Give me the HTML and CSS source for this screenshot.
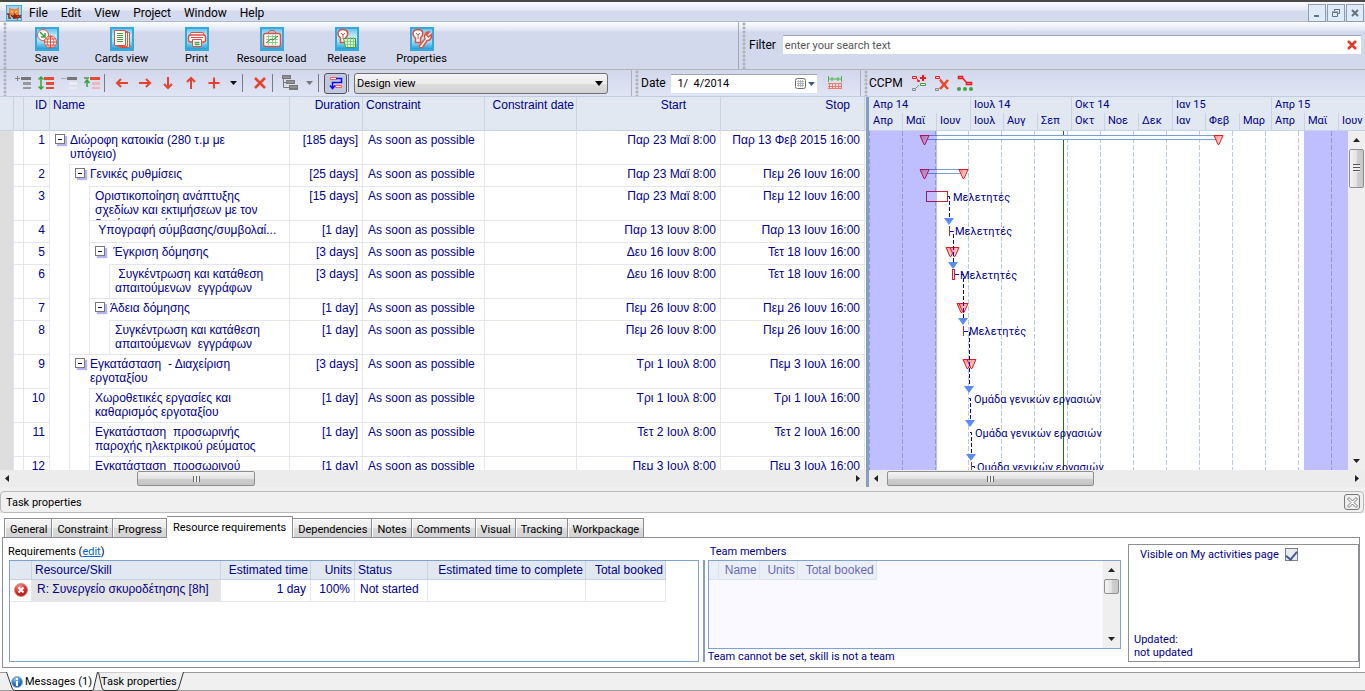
FILE: index.html
```
<!DOCTYPE html>
<html lang="el">
<head>
  <meta charset="UTF-8" />
  <meta name="viewport" content="width=device-width, initial-scale=1.0" />
  <title>Lynx - Task properties</title>
  <link rel="stylesheet" href="styles.css">
</head>
<body>
  <!-- shared gradients -->
  <svg class="defs" width="0" height="0" aria-hidden="true">
    <defs>
      <linearGradient id="tile" x1="0" y1="0" x2="0" y2="1">
        <stop offset="0" stop-color="#6cc6ea" />
        <stop offset="0.35" stop-color="#c4e9f7" />
        <stop offset="0.65" stop-color="#a0daf1" />
        <stop offset="1" stop-color="#1fa0d8" />
      </linearGradient>
      <linearGradient id="redTri" x1="0" y1="0" x2="1" y2="1">
        <stop offset="0" stop-color="#ff8888" />
        <stop offset="1" stop-color="#fff0ee" />
      </linearGradient>
      <radialGradient id="redBall" cx="0.4" cy="0.25" r="0.8">
        <stop offset="0" stop-color="#f59a94" />
        <stop offset="0.6" stop-color="#d42a24" />
        <stop offset="1" stop-color="#a81410" />
      </radialGradient>
      <radialGradient id="blueBall" cx="0.4" cy="0.25" r="0.8">
        <stop offset="0" stop-color="#8fc6f2" />
        <stop offset="0.6" stop-color="#2274c4" />
        <stop offset="1" stop-color="#0d4f98" />
      </radialGradient>
      <path id="tri" d="M-4.5 0.5H4.5L0.5 9.5H-0.5Z" fill="url(#redTri)" stroke="#dc1c1c" />
      <path id="arrow" d="M-5 0H5L0 7Z" fill="#5a8cf8" />
    </defs>
  </svg>

  <header class="menubar">
    <svg class="logo" width="16" height="16" viewBox="0 0 16 16">
      <rect width="16" height="16" fill="#3eaee2" />
      <rect x="1" y="1" width="14" height="14" fill="#9bd7ef" />
      <path d="M3 10L3 2L6 4H10L13 2V10Z" fill="#f0863a" />
      <path d="M5 6L7 7.500M11 6L9 7.500" stroke="#fbd9a8" />
      <path d="M1 9H3V13H5M5 10L7 12L8 10V14M9 14V10L11 13V10M12 10L15 13M15 10L12 13" fill="none" stroke="#8a2a10" stroke-width="1.500" />
    </svg>
    <nav class="menu">
      <button>File</button>
      <button>Edit</button>
      <button>View</button>
      <button>Project</button>
      <button>Window</button>
      <button>Help</button>
    </nav>
    <div class="window-buttons">
      <button aria-label="Minimize"><svg width="10" height="10"><path d="M2 7H7V9H2Z" fill="#66727f" /></svg></button>
      <button aria-label="Restore"><svg width="10" height="10"><path d="M3.500 3V1.500H8.500V5.500H7M1.500 4.500H6.500V8.500H1.500ZM1 4H7M3 1.500H9" fill="none" stroke="#66727f" /></svg></button>
      <button aria-label="Close"><svg width="10" height="10"><path d="M2 2L8 8M8 2L2 8" stroke="#66727f" stroke-width="2" /></svg></button>
    </div>
  </header>

  <div class="toolbar">
    <div class="bar main-bar">
      <button class="tool">
        <svg width="24" height="24"><rect width="24" height="24" fill="#35a9de" /><rect x="2" y="2" width="20" height="20" fill="url(#tile)" /><circle cx="8" cy="8" r="5.500" fill="#fff" stroke="#e05040" /><path d="M5 5L10 10M10 6V10H6" fill="none" stroke="#3aa13a" stroke-width="1.500" /><circle cx="15.500" cy="15" r="6" fill="#fff" stroke="#e05040" /><path d="M9.500 15H21.500M15.500 9V21M10.500 12H20.500M10.500 18H20.500M15.500 9C11 12 11 18 15.500 21C20 18 20 12 15.500 9" fill="none" stroke="#e05040" /></svg>
        Save
      </button>
      <button class="tool">
        <svg width="24" height="24"><rect width="24" height="24" fill="#35a9de" /><rect x="2" y="2" width="20" height="20" fill="url(#tile)" /><path d="M9.500 5.500H19.500V20.500H9.500ZM7.500 4.500H17.500V19.500H7.500Z" fill="#fff" stroke="#e05040" /><path d="M4.500 3.500H15.500V18.500H4.500Z" fill="#fff" stroke="#e05040" /><path d="M7 6.500H13M7 8.500H13M7 10.500H13M7 12.500H13M7 14.500H13" stroke="#4aa84a" /></svg>
        Cards view
      </button>
      <button class="tool">
        <svg width="24" height="24"><rect width="24" height="24" fill="#35a9de" /><rect x="2" y="2" width="20" height="20" fill="url(#tile)" /><path d="M5 8L6 5.500H18L19 8" fill="#fff" stroke="#e05040" /><rect x="3.500" y="8" width="17" height="7" rx="2" fill="#fff" stroke="#e05040" stroke-width="1.500" /><path d="M6 10.500H18" stroke="#e05040" /><path d="M7.500 12.500H16.500V19.500H7.500Z" fill="#fff" stroke="#e05040" /><path d="M9.500 15.500H14.500M9.500 17.500H14.500" stroke="#4aa84a" stroke-width="1.500" /></svg>
        Print
      </button>
      <button class="tool">
        <svg width="24" height="24"><rect width="24" height="24" fill="#35a9de" /><rect x="2" y="2" width="20" height="20" fill="url(#tile)" /><path d="M8 6L10 3.500H14L16 6" fill="none" stroke="#e05040" /><rect x="3.500" y="6.500" width="17" height="13" rx="2" fill="#fff" stroke="#e05040" stroke-width="1.500" /><path d="M6 9.500H18M6 12.500H18M6 15.500H18M8.500 8V18M12.500 8V18M15.500 8V18" stroke="#8fd08f" /><path d="M6 16L11 12L13 13L18 9" fill="none" stroke="#2c8c2c" /></svg>
        Resource load
      </button>
      <button class="tool">
        <svg width="24" height="24"><rect width="24" height="24" fill="#35a9de" /><rect x="2" y="2" width="20" height="20" fill="url(#tile)" /><path d="M5.500 12.500V11C1 7 3 2.500 8 2.500S14.500 7 10.500 11V15.500H5.500Z" fill="#fff" stroke="#e05040" stroke-width="1.500" /><path d="M6 6L8 8L10 6M8 8V12" fill="none" stroke="#e05040" /><path d="M8.500 11.500H20.500V20.500H10.500Z" fill="#d9f2d0" stroke="#3f9f3f" /><path d="M10 14.500H20M10 17.500H20M12.500 10V20M15.500 10V20M18.500 10V20" stroke="#8ccc8c" /></svg>
        Release
      </button>
      <button class="tool">
        <svg width="24" height="24"><rect width="24" height="24" fill="#35a9de" /><rect x="2" y="2" width="20" height="20" fill="url(#tile)" /><path d="M5.500 12.500V11C1 7 3 2.500 8 2.500S14.500 7 10.500 11V15.500H5.500Z" fill="#fff" stroke="#e05040" stroke-width="1.500" /><path d="M6 6L8 8L10 6M8 8V12" fill="none" stroke="#e05040" /><path d="M10 18L15 12C13 8 16 4.500 19 5L16.500 8L18.500 10L21.500 7.500C22 12 19 14 17 13.500L12.500 20.500C10 21.500 8.500 19.500 10 18Z" fill="#fff" stroke="#e05040" stroke-width="1.500" /></svg>
        Properties
      </button>
    </div>
    <div class="bar filter-bar">
      <label for="filter">Filter</label>
      <div class="field">
        <input id="filter" type="text" placeholder="enter your search text" />
        <button aria-label="Clear filter"><svg width="12" height="12"><path d="M2 2L10 10M10 2L2 10" stroke="#e03c28" stroke-width="2.500" /></svg></button>
      </div>
    </div>
  </div>

  <div class="toolbar second">
    <div class="bar edit-bar">
      <button aria-label="Insert row"><svg width="16" height="16"><path d="M0 3.500H5M2.500 1V6" stroke="#808080" /><path d="M6 2H16V5H6Z" fill="#777" /><path d="M8 7H16V10H8ZM8 12H16V14H8Z" fill="#999" /></svg></button>
      <button aria-label="Expand all"><svg width="16" height="16"><path d="M3 2V14M0.500 4.500L3 2L5.500 4.500M0.500 11.500L3 14L5.500 11.500" fill="none" stroke="#3aa13a" stroke-width="1.500" /><path d="M6 2H16V5H6ZM8 7H16V10H8ZM8 12H16V14H8Z" fill="#e34b36" /></svg></button>
      <button aria-label="Collapse row"><svg width="16" height="16"><path d="M0 3.500H5" stroke="#aaa" /><path d="M6 2H16V5H6Z" fill="#777" /><path d="M8 7H16V10H8ZM8 12H16V14H8Z" fill="#ececee" /></svg></button>
      <button aria-label="Collapse all"><svg width="16" height="16"><path d="M3 12V5M0.500 8L3 5L5.500 8M0 3H5" fill="none" stroke="#3aa13a" stroke-width="1.500" /><path d="M6 2H16V5H6Z" fill="#e34b36" /><path d="M8 7H16V10H8ZM8 12H16V14H8Z" fill="#f0b8b8" /></svg></button>
      <i class="sep"></i>
      <button aria-label="Outdent"><svg width="14" height="14"><path d="M1.500 7H13M6 3L2 7L6 11" fill="none" stroke="#e8402a" stroke-width="2" /></svg></button>
      <button aria-label="Indent"><svg width="14" height="14"><path d="M1 7H12.500M8 3L12 7L8 11" fill="none" stroke="#e8402a" stroke-width="2" /></svg></button>
      <button aria-label="Move down"><svg width="14" height="14"><path d="M7 1V12.500M3 8L7 12L11 8" fill="none" stroke="#e8402a" stroke-width="2" /></svg></button>
      <button aria-label="Move up"><svg width="14" height="14"><path d="M7 13V1.500M3 6L7 2L11 6" fill="none" stroke="#e8402a" stroke-width="2" /></svg></button>
      <button aria-label="Add"><svg width="14" height="14"><path d="M7 1.500V12.500M1.500 7H12.500" stroke="#e8402a" stroke-width="2" /></svg></button>
      <button class="drop" aria-label="Add options"><svg width="7" height="4"><path d="M0 0H7L3.500 4Z" fill="#111" /></svg></button>
      <i class="sep"></i>
      <button aria-label="Delete"><svg width="14" height="14"><path d="M2 2L12 12M12 2L2 12" stroke="#e8402a" stroke-width="2.500" /></svg></button>
      <i class="sep"></i>
      <button aria-label="Outline level"><svg width="17" height="16"><path d="M1 0H10V4H1ZM5 5H14V9H5ZM8 10H17V15H8Z" fill="#777" /><path d="M2.500 4V12.500H8M2.500 7.500H5" fill="none" stroke="#777" /><path d="M2 2H9M6 7H13M9 12H16" stroke="#aaa" /></svg></button>
      <button class="drop" aria-label="Level options"><svg width="7" height="4"><path d="M0 0H7L3.500 4Z" fill="#777" /></svg></button>
      <i class="sep"></i>
      <button class="pressed" aria-label="Show links" aria-pressed="true"><svg width="14" height="14"><path d="M1.500 1.500H7.500V3.500H1.500ZM6.500 9.500H12.500V11.500H6.500Z" fill="#fff" stroke="#ff5a5a" /><path d="M7 2.500H12.500V6.500H3.500V12M1 9.500L3.500 12.500L6 9.500" fill="none" stroke="#0a0aff" stroke-width="1.500" /></svg></button>
      <i class="sep"></i>
      <div class="select">
        <select aria-label="View"><option>Design view</option></select>
        <svg width="8" height="5"><path d="M0 0H8L4 5Z" fill="#000" /></svg>
      </div>
    </div>
    <div class="bar date-bar">
      <label for="date">Date</label>
      <div class="field">
        <input id="date" type="text" value=" 1/  4/2014" />
        <button aria-label="Open calendar"><svg width="22" height="12"><rect x="0.500" y="0.500" width="10" height="10" rx="2" fill="#fff" stroke="#6f6a66" /><path d="M2 3.500H9M2 5.500H9M2 7.500H9M3.500 2V9M5.500 2V9M7.500 2V9" stroke="#b5b5b8" /><path d="M13 4H20L16.500 8Z" fill="#44597c" /></svg></button>
      </div>
      <button class="icon" aria-label="Fit to dates"><svg width="16" height="16"><path d="M1.500 1V7M14.500 1V7" stroke="#49b449" /><path d="M2 4H14M5 2V6M11 2V6" stroke="#49b449" /><path d="M1 8.500H15M1 11.500H15M1 13.500H15M2.500 8V14M5.500 8V14M8.500 8V14M11.500 8V14M14.500 8V14" stroke="#ee7a68" /></svg></button>
    </div>
    <div class="bar ccpm-bar">
      <span>CCPM</span>
      <button aria-label="Create CCPM plan"><svg width="16" height="16"><path d="M1.500 1.500H5.500V3.500H1.500ZM6 3.500L7 5M6.500 5.500H8.500V6.500H6.500Z" fill="none" stroke="#f01818" /><path d="M9 3H15M12 0V6" stroke="#f01818" stroke-width="2" /><path d="M9.500 8.500H14.500V10.500H9.500Z" fill="#fff" stroke="#4a9a4a" /><path d="M1.500 13.500H4.500V15.500H1.500ZM5 13L8 10" fill="none" stroke="#888" /></svg></button>
      <button aria-label="Remove CCPM plan"><svg width="16" height="16"><path d="M1.500 1.500H5.500V3.500H1.500ZM6 3.500L8 6" fill="none" stroke="#f01818" /><path d="M6 5L14 14M14 5L6 14" stroke="#ee4422" stroke-width="2.500" /><path d="M1.500 13.500H4.500V15.500H1.500Z" fill="none" stroke="#888" /></svg></button>
      <button aria-label="CCPM status"><svg width="16" height="16"><path d="M1.500 1.500H5.500V3.500H1.500ZM6 3.500L9 7M9.500 7.500H14.500V9.500H9.500Z" fill="none" stroke="#f01818" stroke-width="1.500" /><circle cx="2" cy="14" r="2" fill="#3fa53f" /><circle cx="8" cy="14" r="2" fill="#3fa53f" /><circle cx="14" cy="14" r="2" fill="#3fa53f" /></svg></button>
    </div>
  </div>

  <main class="workspace">
    <section class="tasks">
      <div class="tasks-view">
        <table class="grid">
          <colgroup>
            <col class="c-mark"><col class="c-flag"><col class="c-id"><col class="c-name"><col class="c-duration"><col class="c-constraint"><col class="c-cdate"><col class="c-date"><col class="c-date"><col>
          </colgroup>
          <thead>
            <tr><th></th><th></th><th class="num">ID</th><th>Name</th><th class="num">Duration</th><th>Constraint</th><th class="num">Constraint date</th><th class="start">Start</th><th class="stop">Stop</th><th></th></tr>
          </thead>
          <tbody>
            <tr class="tall"><td></td><td></td><td class="num">1</td><td class="name"><div class="tree"><div class="node root"><button class="toggle" aria-label="Collapse"></button><span>Διώροφη κατοικία (280 τ.μ με<br>υπόγειο)</span></div></div></td><td class="num">[185 days]</td><td>As soon as possible</td><td></td><td class="num">Παρ 23 Μαϊ 8:00</td><td class="num">Παρ 13 Φεβ 2015 16:00</td><td></td></tr>
            <tr><td></td><td></td><td class="num">2</td><td class="name"><div class="tree"><i></i><div class="node"><button class="toggle" aria-label="Collapse"></button><span>Γενικές ρυθμίσεις</span></div></div></td><td class="num">[25 days]</td><td>As soon as possible</td><td></td><td class="num">Παρ 23 Μαϊ 8:00</td><td class="num">Πεμ 26 Ιουν 16:00</td><td></td></tr>
            <tr class="tall"><td></td><td></td><td class="num">3</td><td class="name"><div class="tree"><i></i><i></i><div class="node"><span>Οριστικοποίηση ανάπτυξης<br>σχεδίων και εκτιμήσεων με τον<br>δημόσιο φορέα</span></div></div></td><td class="num">[15 days]</td><td>As soon as possible</td><td></td><td class="num">Παρ 23 Μαϊ 8:00</td><td class="num">Πεμ 12 Ιουν 16:00</td><td></td></tr>
            <tr><td></td><td></td><td class="num">4</td><td class="name"><div class="tree"><i></i><i></i><div class="node"><span>&nbsp;Υπογραφή σύμβασης/συμβολαί...</span></div></div></td><td class="num">[1 day]</td><td>As soon as possible</td><td></td><td class="num">Παρ 13 Ιουν 8:00</td><td class="num">Παρ 13 Ιουν 16:00</td><td></td></tr>
            <tr><td></td><td></td><td class="num">5</td><td class="name"><div class="tree"><i></i><i></i><div class="node"><button class="toggle" aria-label="Collapse"></button><span>&nbsp;Έγκριση δόμησης</span></div></div></td><td class="num">[3 days]</td><td>As soon as possible</td><td></td><td class="num">Δευ 16 Ιουν 8:00</td><td class="num">Τετ 18 Ιουν 16:00</td><td></td></tr>
            <tr class="tall"><td></td><td></td><td class="num">6</td><td class="name"><div class="tree"><i></i><i></i><i></i><div class="node"><span>&nbsp;Συγκέντρωση και κατάθεση<br>απαιτούμενων&nbsp; εγγράφων</span></div></div></td><td class="num">[3 days]</td><td>As soon as possible</td><td></td><td class="num">Δευ 16 Ιουν 8:00</td><td class="num">Τετ 18 Ιουν 16:00</td><td></td></tr>
            <tr><td></td><td></td><td class="num">7</td><td class="name"><div class="tree"><i></i><i></i><div class="node"><button class="toggle" aria-label="Collapse"></button><span>Άδεια δόμησης</span></div></div></td><td class="num">[1 day]</td><td>As soon as possible</td><td></td><td class="num">Πεμ 26 Ιουν 8:00</td><td class="num">Πεμ 26 Ιουν 16:00</td><td></td></tr>
            <tr class="tall"><td></td><td></td><td class="num">8</td><td class="name"><div class="tree"><i></i><i></i><i></i><div class="node"><span>Συγκέντρωση και κατάθεση<br>απαιτούμενων&nbsp; εγγράφων</span></div></div></td><td class="num">[1 day]</td><td>As soon as possible</td><td></td><td class="num">Πεμ 26 Ιουν 8:00</td><td class="num">Πεμ 26 Ιουν 16:00</td><td></td></tr>
            <tr class="tall"><td></td><td></td><td class="num">9</td><td class="name"><div class="tree"><i></i><div class="node"><button class="toggle" aria-label="Collapse"></button><span>Εγκατάσταση&nbsp; - Διαχείριση<br>εργοταξίου</span></div></div></td><td class="num">[3 days]</td><td>As soon as possible</td><td></td><td class="num">Τρι 1 Ιουλ 8:00</td><td class="num">Πεμ 3 Ιουλ 16:00</td><td></td></tr>
            <tr class="tall"><td></td><td></td><td class="num">10</td><td class="name"><div class="tree"><i></i><i></i><div class="node"><span>Χωροθετικές εργασίες και<br>καθαρισμός εργοταξίου</span></div></div></td><td class="num">[1 day]</td><td>As soon as possible</td><td></td><td class="num">Τρι 1 Ιουλ 8:00</td><td class="num">Τρι 1 Ιουλ 16:00</td><td></td></tr>
            <tr class="tall"><td></td><td></td><td class="num">11</td><td class="name"><div class="tree"><i></i><i></i><div class="node"><span>Εγκατάσταση&nbsp; προσωρινής<br>παροχής ηλεκτρικού ρεύματος</span></div></div></td><td class="num">[1 day]</td><td>As soon as possible</td><td></td><td class="num">Τετ 2 Ιουλ 8:00</td><td class="num">Τετ 2 Ιουλ 16:00</td><td></td></tr>
            <tr class="tall"><td></td><td></td><td class="num">12</td><td class="name"><div class="tree"><i></i><i></i><div class="node"><span>Εγκατάσταση&nbsp; προσωρινού</span></div></div></td><td class="num">[1 day]</td><td>As soon as possible</td><td></td><td class="num">Πεμ 3 Ιουλ 8:00</td><td class="num">Πεμ 3 Ιουλ 16:00</td><td></td></tr>
          </tbody>
        </table>
      </div>
      <div class="hscroll">
        <svg width="4" height="7"><path d="M4 0V7L0 3.500Z" fill="#222" /></svg>
        <div class="track"><div class="thumb task-thumb"></div></div>
        <svg width="4" height="7"><path d="M0 0V7L4 3.500Z" fill="#222" /></svg>
      </div>
    </section>

    <section class="gantt">
      <div class="timescale">
        <div class="quarter"><b>Απρ 14</b><div><span>Απρ</span><span>Μαϊ</span><span>Ιουν</span></div></div>
        <div class="quarter"><b>Ιουλ 14</b><div><span>Ιουλ</span><span>Αυγ</span><span>Σεπ</span></div></div>
        <div class="quarter"><b>Οκτ 14</b><div><span>Οκτ</span><span>Νοε</span><span>Δεκ</span></div></div>
        <div class="quarter"><b>Ιαν 15</b><div><span>Ιαν</span><span>Φεβ</span><span class="short">Μαρ</span></div></div>
        <div class="quarter"><b>Απρ 15</b><div><span>Απρ</span><span>Μαϊ</span><span>Ιουν</span></div></div>
      </div>
      <div class="gantt-body">
        <svg class="chart">
          <defs>
            <pattern id="months" width="33" height="7" patternUnits="userSpaceOnUse"><path d="M0.500 0V5" stroke="#b9cbe0" /></pattern>
          </defs>
          <rect width="100%" height="100%" fill="url(#months)" />
          <path d="M194.500 0V2000" stroke="#0a7a0a" />

          <g fill="#fff" stroke="#7a9fd6">
            <rect x="55.500" y="4.500" width="294" height="4" />
            <rect x="55.500" y="38.500" width="39" height="4" />
          </g>
          <g fill="#fff" stroke="#cc2233">
            <rect x="57.500" y="60.500" width="21" height="10" />
            <rect x="83.500" y="138.500" width="2" height="10" />
            <path d="M80.500 95V105M94.500 195V205M102.500 331V341" />
          </g>
          <g>
            <use href="#tri" x="55.500" y="4" /><use href="#tri" x="349.500" y="4" />
            <use href="#tri" x="55.500" y="38" /><use href="#tri" x="94.500" y="38" />
            <use href="#tri" x="81.500" y="116" /><use href="#tri" x="85.500" y="116" />
            <use href="#tri" x="92.500" y="172" /><use href="#tri" x="94.500" y="172" />
            <use href="#tri" x="98.500" y="228" /><use href="#tri" x="102.500" y="228" />
          </g>
          <path class="link" d="M79 65.500H80.500V88M81 100.500H84.500V131M86 143.500H94.500V187M95 200.500H100.500V256M100 267.500H101.500V290M101 301.500H102.500V324M103 335.500H105.500V345" />
          <g>
            <use href="#arrow" x="80" y="87" /><use href="#arrow" x="84" y="131" /><use href="#arrow" x="94" y="187" />
            <use href="#arrow" x="100" y="255" /><use href="#arrow" x="101" y="289" /><use href="#arrow" x="102" y="323" />
          </g>
          <text x="84" y="70">Μελετητές</text>
          <text x="86" y="104">Μελετητές</text>
          <text x="91" y="148">Μελετητές</text>
          <text x="100" y="204">Μελετητές</text>
          <text x="105" y="272">Ομάδα γενικών εργασιών</text>
          <text x="106" y="306">Ομάδα γενικών εργασιών</text>
          <text x="108" y="340">Ομάδα γενικών εργασιών</text>
          <!-- months outside the plan -->
          <g fill="#0000ff" fill-opacity="0.25">
            <rect width="68" height="100%" />
            <rect x="435" width="45" height="100%" />
          </g>
        </svg>
        <div class="vscroll">
          <svg width="7" height="4"><path d="M0 4H7L3.500 0Z" fill="#222" /></svg>
          <div class="track"><div class="thumb"></div></div>
          <svg width="7" height="4"><path d="M0 0H7L3.500 4Z" fill="#222" /></svg>
        </div>
      </div>
      <div class="hscroll">
        <svg width="4" height="7"><path d="M4 0V7L0 3.500Z" fill="#222" /></svg>
        <div class="track"><div class="thumb gantt-thumb"></div></div>
        <svg width="4" height="7"><path d="M0 0V7L4 3.500Z" fill="#222" /></svg>
      </div>
    </section>
  </main>

  <div class="panel-title">
    <span>Task properties</span>
    <button aria-label="Close panel"><svg width="11" height="11"><path d="M2 0.500L5.500 4L9 0.500L10.500 2L7 5.500L10.500 9L9 10.500L5.500 7L2 10.500L0.500 9L4 5.500L0.500 2Z" fill="#fff" stroke="#777" /></svg></button>
  </div>

  <section class="panel">
    <div class="tabs">
      <button>General</button>
      <button>Constraint</button>
      <button>Progress</button>
      <button class="active">Resource requirements</button>
      <button>Dependencies</button>
      <button>Notes</button>
      <button>Comments</button>
      <button>Visual</button>
      <button>Tracking</button>
      <button>Workpackage</button>
    </div>
    <div class="tab-content">
      <div class="requirements">
        <div class="caption">Requirements (<a href="#">edit</a>)</div>
        <div class="box">
          <table class="mini req-table">
            <colgroup><col class="r-icon"><col class="r-skill"><col class="r-time"><col class="r-units"><col class="r-status"><col class="r-complete"><col class="r-booked"></colgroup>
            <tr><th></th><th>Resource/Skill</th><th class="num">Estimated time</th><th class="num">Units</th><th>Status</th><th class="num">Estimated time to complete</th><th class="num">Total booked</th></tr>
            <tr>
              <td class="state"><svg width="14" height="14"><circle cx="7" cy="7" r="6.500" fill="url(#redBall)" stroke="#d88" /><path d="M4.500 4.500L9.500 9.500M9.500 4.500L4.500 9.500" stroke="#fff" stroke-width="2" /></svg></td>
              <td class="selected">R: Συνεργείο σκυροδέτησης [8h]</td><td class="num">1 day</td><td class="num">100%</td><td>Not started</td><td></td><td></td>
            </tr>
          </table>
        </div>
      </div>
      <div class="splitter"></div>
      <div class="team">
        <div class="caption">Team members</div>
        <div class="box">
          <div class="team-list">
            <table class="mini team-table">
              <colgroup><col class="t-mark"><col class="t-name"><col class="t-units"><col class="t-booked"></colgroup>
              <tr><th></th><th class="num">Name</th><th class="num">Units</th><th class="num">Total booked</th></tr>
            </table>
          </div>
          <div class="vscroll">
            <svg width="7" height="4"><path d="M0 4H7L3.500 0Z" fill="#222" /></svg>
            <div class="track"><div class="thumb small"></div></div>
            <svg width="7" height="4"><path d="M0 0H7L3.500 4Z" fill="#222" /></svg>
          </div>
        </div>
        <div class="note">Team cannot be set, skill is not a team</div>
      </div>
      <div class="activity">
        <div class="visible">
          <label for="visible">Visible on My activities page</label>
          <input type="checkbox" id="visible" checked />
        </div>
        <div class="updated">Updated:<br>not updated</div>
      </div>
    </div>
  </section>

  <footer class="bottom-tabs">
    <button class="messages">
      <svg class="shape" width="92" height="19"><path d="M0 0L6 16Q7 18.500 9 18.500H86Q88 18.500 88 16L92 0Z" fill="#fff" /><path d="M0.500 0L6 16Q7 18.500 9 18.500H86Q88 18.500 88 15L91.500 0" fill="none" stroke="#333" /></svg>
      <svg width="12" height="12"><circle cx="6" cy="6" r="5.500" fill="url(#blueBall)" stroke="#9bc" /><path d="M6 2V4M6 5V10" stroke="#fff" stroke-width="2" /></svg>
      <span>Messages (1)</span>
    </button>
    <button class="properties">
      <svg class="shape" width="86" height="19"><path d="M0.500 0.500L4 16Q5 18.500 7 18.500H78Q80 18.500 81 15L85.500 0" fill="#f0f0f0" stroke="#333" /></svg>
      <span>Task properties</span>
    </button>
  </footer>
</body>
</html>
```
FILE: styles.css
```
* {
  box-sizing: border-box;
}
body {
  margin: 0;
  height: 100vh;
  display: flex;
  flex-direction: column;
  overflow: hidden;
  background: #f0f0f0;
  color: #000;
  font: 11px/13px Roboto, Tahoma, sans-serif;
}
button, input, select {
  font: inherit;
  color: inherit;
  margin: 0;
  padding: 0;
  border: none;
  background: none;
}
svg {
  display: block;
  flex: none;
}
.defs {
  position: absolute;
}

/* menu */
.menubar {
  flex: none;
  display: flex;
  align-items: center;
  height: 22px;
  padding: 3px 1px 0 6px;
  border-top: 2px solid #4a4a4a;
  border-bottom: 1px solid #b4b8c4;
  background: linear-gradient(#fbfcfe, #e6eaf6 8px, #d5dbee 9px, #d5dbee);
}
.menu {
  flex: 1;
  display: flex;
  gap: 13px;
  padding-left: 7px;
  font-size: 12px;
}
.window-buttons {
  display: flex;
  gap: 1px;
}
.window-buttons button {
  display: flex;
  align-items: center;
  justify-content: center;
  width: 18px;
  height: 18px;
  border: 1px solid #8e9db0;
  background: #dfebf7;
}

/* toolbars */
.toolbar {
  flex: none;
  display: flex;
  height: 48px;
  border-bottom: 1px solid #b4b4ba;
}
.second {
  height: 27px;
  border-bottom-color: #c0cde0;
}
.bar {
  display: flex;
  align-items: center;
  background: radial-gradient(circle, #b0b2bc 1px, transparent 2px) 3px 0 / 4px 4px repeat-y, linear-gradient(#fbfcfe, #e2e7f4 8px, #d3d9ed 10px, #d3d9ed);
}
.second .bar {
  background: radial-gradient(circle, #b0b2bc 1px, transparent 2px) 3px 0 / 4px 4px repeat-y, linear-gradient(#d2d8ec, #dfe5f4);
}
.main-bar {
  flex: 0 1 739px;
  padding-left: 9px;
  border-right: 1px solid #a8a8b0;
}
.tool {
  display: flex;
  flex-direction: column;
  align-items: center;
  gap: 1px;
  width: 75px;
  white-space: nowrap;
}
.filter-bar {
  flex: 1;
  gap: 7px;
  padding: 0 4px 2px 10px;
}
.filter-bar label, .date-bar label, .ccpm-bar span {
  font-size: 12px;
}
.filter-bar label {
  padding-top: 2px;
}
.field {
  display: flex;
  align-items: center;
  background: #fff;
  border-top: 1px solid #a0a4b0;
  height: 19px;
}
.filter-bar .field {
  flex: 1;
  padding-right: 3px;
}
.field input {
  flex: 1;
  min-width: 0;
  outline: none;
}
.filter-bar input {
  padding-left: 2px;
}
.filter-bar input::placeholder {
  color: #555;
  opacity: 1;
}
.edit-bar {
  width: 632px;
  padding-left: 11px;
  border-right: 1px solid #b0b0b8;
}
.edit-bar button, .ccpm-bar button {
  display: flex;
  align-items: center;
  justify-content: center;
  width: 23px;
  height: 21px;
}
.edit-bar .drop {
  width: 16px;
}
.edit-bar .pressed {
  border: 1px solid #51545e;
  border-radius: 3px;
  background: #c3c9dd;
}
.sep {
  width: 1px;
  height: 18px;
  margin: 0 5px 0 1px;
  background: #777b88;
}
.select {
  display: flex;
  align-items: center;
  width: 254px;
  height: 21px;
  padding-right: 4px;
  border: 1px solid #707070;
  border-radius: 3px;
  background: linear-gradient(#f4f4f4, #ebebeb 50%, #dddddd 51%, #d2d2d2);
}
.select select {
  flex: 1;
  appearance: none;
  padding-left: 2px;
}
.date-bar {
  width: 229px;
  gap: 5px;
  padding-left: 9px;
  border-right: 1px solid #b0b0b8;
}
.date-bar .field {
  flex: none;
  width: 146px;
}
.date-bar input {
  padding-left: 4px;
  white-space: pre;
}
.date-bar .icon {
  padding-left: 5px;
}
.ccpm-bar {
  flex: 1;
  padding-left: 8px;
}
.ccpm-bar span {
  padding-right: 5px;
}

/* task table */
.workspace {
  flex: 1;
  min-height: 0;
  display: flex;
  padding-bottom: 4px;
  color: #00008b;
}
.tasks {
  flex: 0 0 866px;
  display: flex;
  flex-direction: column;
}
.tasks-view {
  flex: 1;
  min-height: 0;
  overflow: hidden;
  background: #fff;
}
.grid, .mini {
  table-layout: fixed;
  border-collapse: separate;
  border-spacing: 0;
  font: 12px/14px "Liberation Sans", Arial, sans-serif;
}
.grid {
  width: 100%;
}
.c-mark { width: 14px; }
.c-flag { width: 10px; }
.c-id { width: 26px; }
.c-name { width: 240px; }
.c-duration { width: 73px; }
.c-constraint { width: 122px; }
.c-cdate { width: 92px; }
.c-date { width: 144px; }
.grid th, .mini th {
  border-right: 1px solid #c5d3e5;
  background: #e1e8f1;
  font-weight: normal;
  text-align: left;
  vertical-align: top;
  white-space: nowrap;
}
.mini th {
  border-bottom: 1px solid #c5d3e5;
}
.grid th {
  height: 33px;
  padding: 1px 2px 0 3px;
}
.grid th:last-child, .grid td:last-child {
  border-right: none;
}
.grid .num, .mini .num {
  text-align: right;
}
.grid th.start {
  padding-right: 34px;
  text-align: right;
}
.grid th.stop {
  padding-right: 14px;
  text-align: right;
}
.grid td {
  height: 22px;
  padding: 2px 4px 0 5px;
  border-right: 1px solid #e3e6f0;
  border-top: 1px solid #e3e6f0;
  vertical-align: top;
  white-space: nowrap;
}
.grid .tall td {
  height: 34px;
}
.grid td:first-child {
  border-top-color: #dedede;
  background: #dedede;
}
.grid td.name {
  padding: 0;
  border-top: none;
}
.tree {
  display: flex;
  height: 22px;
  overflow: hidden;
}
.tall .tree {
  height: 34px;
}
.tree i {
  flex: none;
  width: 20px;
  border-left: 1px solid #e3e6f0;
}
.tree i:first-child {
  width: 19px;
  border-left: none;
}
.node {
  flex: 1;
  display: flex;
  gap: 5px;
  padding: 2px 0 0 5px;
  border-left: 1px solid #e3e6f0;
  border-top: 1px solid #e3e6f0;
}
.root {
  border-left: none;
}
.grid tr:first-child td, .root {
  border-top-color: #c5d3e5;
}
.toggle {
  width: 10px;
  height: 10px;
  margin-top: 1px;
  border: 1px solid #777;
  background: linear-gradient(#111, #111) center / 4px 1px no-repeat #fff;
  box-shadow: 2px 2px 1px #b4b4f4;
}

/* scrollbars */
.hscroll {
  flex: none;
  display: flex;
  align-items: center;
  gap: 5px;
  height: 17px;
  padding: 0 6px 1px 5px;
  background: #ececec;
}
.track {
  flex: 1;
}
.thumb {
  border: 1px solid #8f8f8f;
  border-radius: 2px;
}
.hscroll .thumb {
  height: 15px;
  background: linear-gradient(#f4f4f4, #e2e2e2 50%, #cfcfcf 51%, #c4c4c4);
}
.hscroll .thumb::before {
  content: "";
  display: block;
  width: 7px;
  height: 6px;
  margin: 4px auto 0;
  background: repeating-linear-gradient(90deg, #666 0, #666 1px, #eee 1px, #eee 3px);
}
.task-thumb {
  width: 118px;
  margin-left: 123px;
}
.gantt-thumb {
  width: 207px;
  margin-left: 4px;
}
.vscroll {
  flex: none;
  display: flex;
  flex-direction: column;
  align-items: center;
  width: 17px;
  padding: 7px 0;
  background: #efefef;
}
.vscroll .thumb {
  width: 15px;
  height: 39px;
  margin-top: 7px;
  background: linear-gradient(90deg, #f4f4f4, #e2e2e2 50%, #cfcfcf 51%, #c8c8c8);
}
.vscroll .thumb::before {
  content: "";
  display: block;
  width: 7px;
  height: 8px;
  margin: 14px auto 0;
  background: repeating-linear-gradient(#555 0, #555 1px, #eee 1px, #eee 3px);
}
.vscroll .small {
  height: 15px;
}
.vscroll .small::before {
  display: none;
}

/* gantt */
.gantt {
  flex: 1;
  min-width: 0;
  display: flex;
  flex-direction: column;
  border-left: 3px solid #84a0bd;
}
.timescale {
  flex: none;
  display: flex;
  height: 34px;
  overflow: hidden;
  border-bottom: 1px solid #c5d3e5;
  background: #e1e8f1;
  line-height: 14px;
}
.quarter {
  flex: none;
  border-left: 1px solid #c5d3e5;
}
.quarter:first-child {
  padding-left: 1px;
  border-left: none;
}
.quarter b {
  display: block;
  height: 16px;
  padding: 1px 0 0 3px;
  font-weight: normal;
}
.quarter div {
  display: flex;
}
.quarter span {
  width: 34px;
  height: 17px;
  padding: 1px 0 0 3px;
  border-left: 1px solid #c5d3e5;
}
.quarter span:first-child {
  width: 32px;
  border-left: none;
}
.quarter .short {
  width: 32px;
}
.gantt-body {
  flex: 1;
  min-height: 0;
  display: flex;
  background: #fff;
}
.chart {
  flex: 1;
  min-width: 0;
  width: 100%;
  height: 100%;
}
.chart text {
  fill: #00008b;
}
.link {
  fill: none;
  stroke: #0000c8;
  stroke-dasharray: 4 2;
}

/* task properties */
.panel-title {
  flex: none;
  display: flex;
  align-items: center;
  justify-content: space-between;
  height: 22px;
  margin-right: 1px;
  padding: 0 3px 0 5px;
  border: 1px solid #b8b8b8;
  border-radius: 4px;
}
.panel-title button {
  display: flex;
  align-items: center;
  justify-content: center;
  width: 16px;
  height: 16px;
  border: 1px solid #777;
  border-radius: 3px;
}
.panel {
  flex: none;
  display: flex;
  flex-direction: column;
  height: 159px;
  padding: 3px 5px 4px 2px;
  background: #fff;
}
.tabs {
  display: flex;
  align-items: flex-end;
  padding-left: 2px;
}
.tabs button {
  height: 19px;
  padding: 2px 4px 0 5px;
  border: 1px solid #8c8c96;
  border-bottom: none;
  border-left-width: 0;
  box-shadow: inset 1px 1px #fff;
  background: linear-gradient(#f4f4f4, #ebebeb 50%, #dcdcdc 51%, #d2d2d2);
}
.tabs button:first-child {
  border-left-width: 1px;
}
.tabs .active {
  position: relative;
  height: 22px;
  margin-bottom: -1px;
  padding: 0 6px;
  background: #fff;
}
.tab-content {
  flex: 1;
  min-height: 0;
  display: flex;
  padding: 6px 0 5px 5px;
  border: 1px solid #8c8c96;
  color: #00008b;
}
.requirements {
  flex: 692;
  display: flex;
  flex-direction: column;
}
.caption {
  height: 16px;
  padding-top: 1px;
}
.requirements .caption {
  color: #000;
}
.requirements .box {
  margin-left: 1px;
}
.caption a {
  color: #0066cc;
}
.box {
  flex: 1;
  min-height: 0;
  display: flex;
  align-items: flex-start;
  border: 1px solid #7fa3d0;
}
.mini th {
  height: 19px;
  padding: 2px 2px 0 3px;
}
.mini td {
  height: 22px;
  padding: 2px 4px 0 5px;
  border-right: 1px solid #e3e6f0;
  border-bottom: 1px solid #e3e6f0;
  vertical-align: top;
  white-space: nowrap;
}
.mini .state {
  padding: 3px 4px 0;
}
.mini .selected {
  background: #e4e4e4;
}
.req-table { width: 656px; }
.r-icon { width: 22px; }
.r-skill { width: 189px; }
.r-time { width: 90px; }
.r-units { width: 44px; }
.r-status { width: 73px; }
.r-complete { width: 158px; }
.r-booked { width: 80px; }
.splitter {
  width: 2px;
  margin: 16px 3px 0 4px;
  background: #84a0bd;
}
.team {
  flex: 414;
  display: flex;
  flex-direction: column;
}
.team .caption {
  padding-left: 2px;
}
.team .box {
  align-items: stretch;
  background: #f9f9ff;
}
.team-list {
  flex: 1;
  opacity: 0.6;
}
.team-table { width: 168px; }
.t-mark { width: 10px; }
.t-name { width: 41px; }
.t-units { width: 38px; }
.t-booked { width: 79px; }
.note {
  height: 13px;
  padding-top: 1px;
}
.activity {
  flex: 0 0 231px;
  display: flex;
  flex-direction: column;
  justify-content: space-between;
  margin-left: 7px;
  padding: 3px 5px 2px;
  border: 1px solid #909090;
}
.visible {
  display: flex;
  align-items: center;
  gap: 6px;
  padding-left: 6px;
}
.visible input {
  appearance: none;
  display: flex;
  align-items: center;
  justify-content: center;
  width: 13px;
  height: 13px;
  border: 1px solid #808080;
  background: #e8ebf0;
}
.visible input:checked::before {
  content: "";
  width: 5px;
  height: 9px;
  border: solid #3f5a9c;
  border-width: 0 2px 2px 0;
  transform: rotate(40deg);
}

/* bottom tabs */
.bottom-tabs {
  flex: none;
  display: flex;
  height: 19px;
  padding-left: 6px;
  border-top: 1px solid #999;
  border-bottom: 1px solid #999;
}
.bottom-tabs button {
  position: relative;
  display: flex;
  align-items: center;
  gap: 2px;
}
.bottom-tabs span, .bottom-tabs svg {
  position: relative;
}
.bottom-tabs .shape {
  position: absolute;
  top: -1px;
  left: 0;
}
.messages {
  width: 92px;
  padding-left: 5px;
}
.properties {
  width: 86px;
  padding-left: 3px;
}
```
